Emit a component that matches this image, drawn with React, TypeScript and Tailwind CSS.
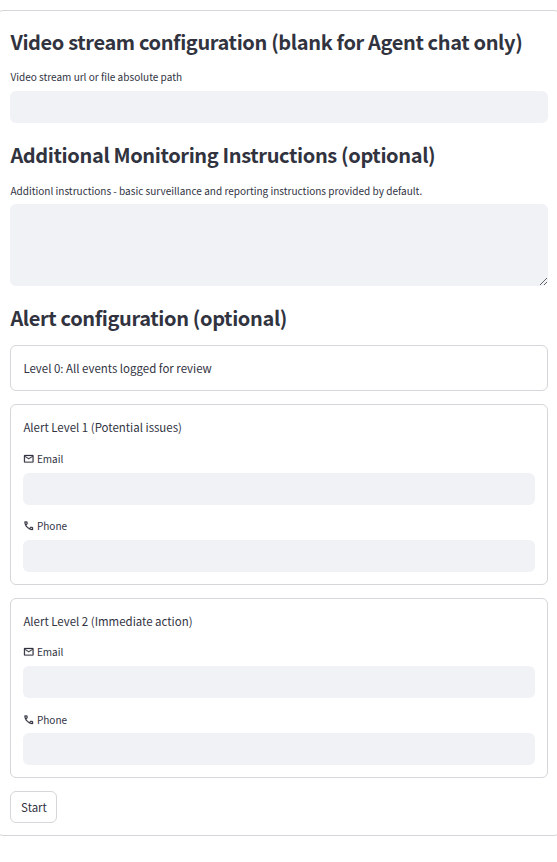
import type { ReactNode } from "react";

function Heading({ children, className }: { children: ReactNode; className: string }) {
  return (
    <h3 className={`flex h-8 items-center whitespace-nowrap pl-[0.4px] text-[20px] leading-8 font-bold tracking-[-0.37px] ${className}`}>
      {children}
    </h3>
  );
}

function Label({ children, className = "" }: { children: ReactNode; className?: string }) {
  return (
    <label className={`flex h-4 items-center whitespace-nowrap pl-[0.4px] text-[10.04px] leading-4 ${className}`}>
      {children}
    </label>
  );
}

function TextInput({ className = "" }: { className?: string }) {
  return <input className={`block h-8 w-full rounded-md bg-[#f0f2f6] px-2 outline-none ${className}`} />;
}

function MailIcon() {
  return (
    <svg viewBox="0 0 24 24" className="mr-0.5 size-[11.5px] shrink-0" fill="currentColor" stroke="currentColor" strokeWidth="0.5">
      <path d="M22 6c0-1.1-.9-2-2-2H4c-1.1 0-2 .9-2 2v12c0 1.1.9 2 2 2h16c1.1 0 2-.9 2-2V6zm-2 0-8 5-8-5h16zm0 12H4V8l8 5 8-5v10z" />
    </svg>
  );
}

function PhoneIcon() {
  return (
    <svg viewBox="0 0 24 24" className="mr-0.5 size-[11.5px] shrink-0" fill="currentColor" stroke="currentColor" strokeWidth="0.5">
      <path d="M19.95 21q-3.125 0-6.175-1.363t-5.55-3.862-3.862-5.55T3 4.05q0-.45.3-.75t.75-.3H8.1q.35 0 .625.238t.325.562l.65 3.5q.05.4-.025.675T9.4 8.45L6.975 10.9q.5.925 1.187 1.787t1.513 1.663q.775.775 1.625 1.438T13.1 17l2.35-2.35q.225-.225.588-.337t.712-.063l3.45.7q.35.1.575.363T21 15.9v4.05q0 .45-.3.75t-.75.3M6.025 9l1.65-1.65L7.25 5H5.025q.125 1.025.35 2.025T6.025 9m8.95 8.95q.975.425 1.988.675T19 18.95v-2.2l-2.35-.475z" />
    </svg>
  );
}

function AlertCard({
  title,
  className,
  emailGap,
  phoneGap,
  inputGap,
}: {
  title: string;
  className: string;
  emailGap: string;
  phoneGap: string;
  inputGap: string;
}) {
  return (
    <section className={`rounded-md border border-[#d5d6d9] px-3 ${className}`}>
      <p className="mt-3 h-5 whitespace-nowrap pl-[0.4px] text-[11.46px] leading-5">{title}</p>
      <Label className={emailGap}>
        <MailIcon />
        Email
      </Label>
      <TextInput className="mt-1.5" />
      <Label className={phoneGap}>
        <PhoneIcon />
        Phone
      </Label>
      <TextInput className={inputGap} />
    </section>
  );
}

export default function App() {
  return (
    <main className="h-[862px] overflow-hidden bg-white pt-2.5 font-['Noto_Sans_CJK_SC','Noto_Sans',sans-serif] text-[#31333f]">
      <form className="-mx-[3px] h-[826px] rounded-md border border-[#d5d6d9] pr-[11px] pl-3">
        <Heading className="mt-[15px]">Video stream configuration (blank for Agent chat only)</Heading>
        <Label className="mt-[11px]">Video stream url or file absolute path</Label>
        <TextInput className="mt-1.5" />
        <Heading className="mt-4">Additional Monitoring Instructions (optional)</Heading>
        <Label className="mt-3">
          Additionl instructions - basic surveillance and reporting instructions provided by default.
        </Label>
        <textarea className="mt-[5px] block h-[82px] w-full resize-y rounded-md bg-[#f0f2f6] outline-none" />
        <Heading className="mt-4">Alert configuration (optional)</Heading>
        <section className="mt-[11px] flex h-[46px] items-center rounded-md border border-[#d5d6d9] px-3">
          <p className="whitespace-nowrap pl-[0.4px] text-[11.46px] leading-5">Level 0: All events logged for review</p>
        </section>
        <AlertCard
          title="Alert Level 1 (Potential issues)"
          className="mt-[13px] h-[181px]"
          emailGap="mt-[14px]"
          phoneGap="mt-[13px]"
          inputGap="mt-1.5"
        />
        <AlertCard
          title="Alert Level 2 (Immediate action)"
          className="mt-[13px] h-[180px]"
          emailGap="mt-[13px]"
          phoneGap="mt-[14px]"
          inputGap="mt-[5px]"
        />
        <button
          type="button"
          className="mt-[13px] flex h-8 w-[47px] items-center justify-center rounded-md border border-[#d5d6d9] pl-px text-[11.46px] leading-5"
        >
          Start
        </button>
      </form>
    </main>
  );
}
